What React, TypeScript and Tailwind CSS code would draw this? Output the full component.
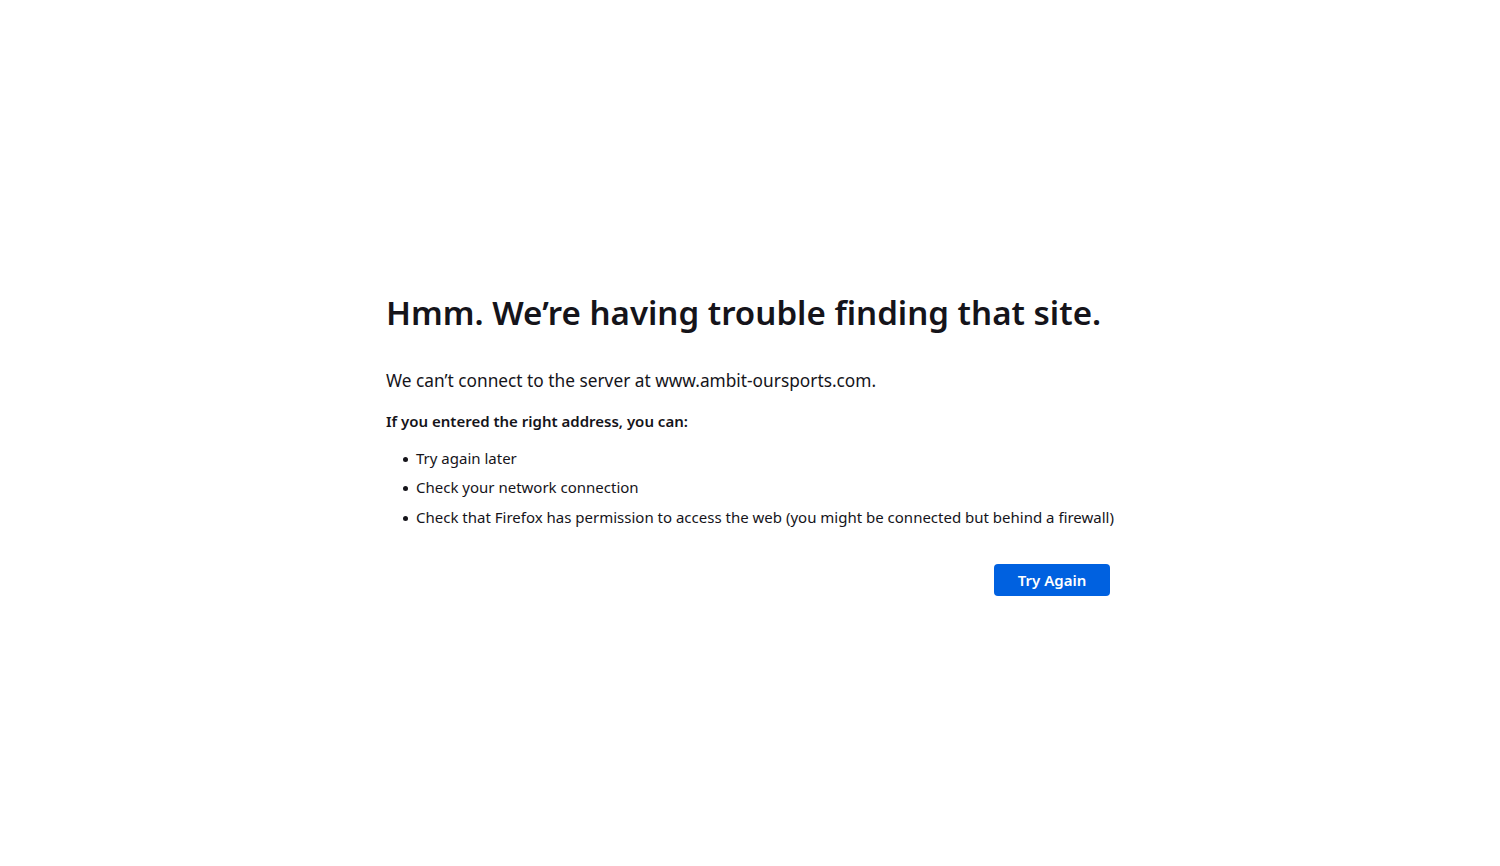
const items = [
  'Try again later',
  'Check your network connection',
  'Check that Firefox has permission to access the web (you might be connected but behind a firewall)',
]

const App: React.FC = () => {
  return (
    <main className="flex min-h-[866px] w-full items-start justify-center bg-white font-['Noto_Sans',sans-serif] text-[#15141a]">
      <div className="mt-[289px] w-[728px]">
        <h1 className="text-[33.1px] leading-[48px] font-semibold">
          Hmm. We’re having trouble finding that site.
        </h1>
        <p className="mt-[31px] text-[17.3px] leading-[26px]">
          We can’t connect to the server at www.ambit-oursports.com.
        </p>
        <p className="mt-[16px] text-[15px] leading-[22px] font-semibold">
          If you entered the right address, you can:
        </p>
        <ul className="mt-[15px] flex flex-col gap-[7px] pl-[17px] text-[15px] leading-[22px]">
          {items.map((t) => (
            <li key={t} className="flex items-center gap-[8px] whitespace-nowrap last:mt-[1px]">
              <span className="mt-[2px] h-[5px] w-[5px] shrink-0 rounded-full bg-[#15141a]" />
              {t}
            </li>
          ))}
        </ul>
        <div className="mt-[36px] flex justify-end">
          <button className="mr-1 h-[32px] w-[116px] rounded-[4px] bg-[#0061e0] text-[15px] font-semibold text-white">
            Try Again
          </button>
        </div>
      </div>
    </main>
  )
}

export default App
